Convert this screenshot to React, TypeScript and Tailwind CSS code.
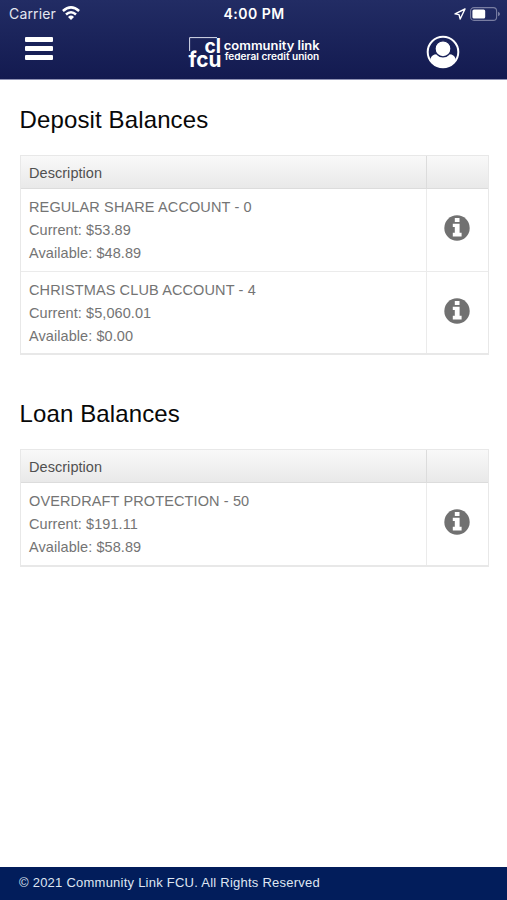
import { Fragment } from 'react'

type Account = {
  name: string
  current: string
  available: string
}

const DEPOSITS: Account[] = [
  { name: 'REGULAR SHARE ACCOUNT - 0', current: '$53.89', available: '$48.89' },
  { name: 'CHRISTMAS CLUB ACCOUNT - 4', current: '$5,060.01', available: '$0.00' },
]

const LOANS: Account[] = [
  { name: 'OVERDRAFT PROTECTION - 50', current: '$191.11', available: '$58.89' },
]

function WifiIcon() {
  return (
    <svg width="18" height="15" viewBox="0 0 18 15" fill="none" stroke="#fff" strokeWidth="2.5">
      <path d="M0.9 5Q9 -2.2 17.1 5" />
      <path d="M4 8.5Q9 3.9 14 8.5" />
      <path d="M6 11Q9 8.2 12 11L9 14Z" fill="#fff" stroke="none" />
    </svg>
  )
}

function LocationIcon() {
  return (
    <svg width="12" height="12" viewBox="0 0 12 12" fill="none" stroke="#fff" strokeWidth="1.4" strokeLinejoin="round">
      <path d="M11 1L1 5.9L5 6.6L6.2 11Z" />
    </svg>
  )
}

function BatteryIcon() {
  return (
    <svg width="30" height="14" viewBox="0 0 30 14">
      <rect x="0.6" y="0.6" width="26" height="12.8" rx="3.4" fill="none" stroke="#797ea2" strokeWidth="1.1" />
      <rect x="2.4" y="2.4" width="12.8" height="9.2" rx="1.6" fill="#fff" />
      <path d="M28 4.8Q30 5.5 30 7Q30 8.5 28 9.2Z" fill="#797ea2" />
    </svg>
  )
}

function Logo() {
  return (
    <svg width="134" height="34" viewBox="0 0 134 34" fill="#fff" className="overflow-visible [font-family:Inter,sans-serif]">
      <path d="M1.6 15V1.6H29" fill="none" stroke="#d9dcec" strokeWidth="1" />
      <text x="16.4" y="16.6" fontSize="19.5" fontWeight="700" textLength="16.5" lengthAdjust="spacingAndGlyphs">cl</text>
      <text x="0.5" y="30.6" fontSize="21" fontWeight="700" textLength="33" lengthAdjust="spacingAndGlyphs">fcu</text>
      <text x="35.8" y="14.4" fontSize="12.5" fontWeight="600" textLength="95.8" lengthAdjust="spacingAndGlyphs">community link</text>
      <text x="36.7" y="23.8" fontSize="9.2" fontWeight="600" textLength="94.6" lengthAdjust="spacingAndGlyphs">federal credit union</text>
    </svg>
  )
}

function ProfileIcon() {
  return (
    <svg width="34" height="34" viewBox="0 0 34 34">
      <circle cx="17" cy="17" r="15.3" fill="none" stroke="#fff" strokeWidth="2" />
      <path d="M4.6 26V23.6C5.2 20.6 7.5 19.4 10.6 19.2H23.4C26.5 19.4 28.8 20.6 29.4 23.6V26A15.3 15.3 0 0 1 4.6 26Z" fill="#fff" />
      <circle cx="17" cy="13.8" r="8" fill="#fff" stroke="#182058" strokeWidth="1.3" />
    </svg>
  )
}

function InfoIcon() {
  return (
    <svg width="26" height="26" viewBox="0 0 26 26">
      <circle cx="13" cy="13" r="12.7" fill="#717171" />
      <path d="M10.8 3H15.5V7H10.8ZM8.8 8.7H15.6V17.8H17.6V21.5H8.8V17.8H10.8V12.1H8.8Z" fill="#fff" />
    </svg>
  )
}

function Balances({ title, accounts }: { title: string; accounts: Account[] }) {
  return (
    <section>
      <h2 className="-ml-[0.5px] h-[34px] text-[24px] leading-[34px] tracking-[0.13px] text-[#080808]">{title}</h2>
      <div className="mt-[18px] grid grid-cols-[406px_1fr] border border-b-2 border-[#e8e8e8] text-[14.5px] text-[#747474]">
        <div className="h-[33px] border-r border-b border-r-[#dcdcdc] border-b-[#dcdcdc] bg-linear-to-b from-[#f9f9f9] to-[#e9e9e9] pl-[8px] leading-[34px] tracking-[0.05px] text-[#505050]">
          Description
        </div>
        <div className="border-b border-[#dcdcdc] bg-linear-to-b from-[#f9f9f9] to-[#e9e9e9]" />
        {accounts.map((account, i) => (
          <Fragment key={account.name}>
            <div
              className={`h-[82px] border-r border-[#ebebeb] pt-[6.6px] pl-[8px] leading-[23.2px] ${i > 0 ? 'border-t' : ''}`}
            >
              <p className="tracking-[0.12px]">{account.name}</p>
              <p className="tracking-[0.07px]">Current: {account.current}</p>
              <p className="tracking-[0.07px]">Available: {account.available}</p>
            </div>
            <button
              aria-label={`Details for ${account.name}`}
              className={`flex h-[82px] items-center justify-center border-[#ebebeb] pr-[1px] pb-[4px] ${i > 0 ? 'border-t' : ''}`}
            >
              <InfoIcon />
            </button>
          </Fragment>
        ))}
      </div>
    </section>
  )
}

export default function App() {
  return (
    <div className="flex h-[900px] w-[507px] flex-col overflow-hidden bg-white font-['Liberation_Sans',sans-serif]">
      <header className="h-[80px] shrink-0 border-b border-[#8f92b4] bg-linear-to-b from-[#222c64] to-[#131a50] text-white">
        {/* Status bar */}
        <div className="grid h-[27px] grid-cols-3 items-center font-['Inter',sans-serif] text-[14px]">
          <div className="flex items-center gap-[6px] pl-[9px]">
            <span className="tracking-[0.15px] text-[#e4e6f0]">Carrier</span>
            <WifiIcon />
          </div>
          <div className="pl-[1px] text-center font-semibold tracking-[0.5px]">4:00 PM</div>
          <div className="flex items-center justify-end gap-[4px] pr-[7px]">
            <LocationIcon />
            <BatteryIcon />
          </div>
        </div>

        {/* Navigation */}
        <div className="grid h-[52px] grid-cols-[188px_1fr_80px] items-start">
          <button aria-label="Menu" className="mt-[10px] ml-[25px] flex w-[28px] flex-col gap-[4px]">
            <span className="h-[5px] rounded-[1px] bg-white" />
            <span className="h-[5px] rounded-[1px] bg-white" />
            <span className="h-[5px] rounded-[1px] bg-white" />
          </button>
          <div className="mt-[9px]">
            <Logo />
          </div>
          <button aria-label="Profile" className="mt-[8px] -ml-[1px] w-[34px]">
            <ProfileIcon />
          </button>
        </div>
      </header>

      <main className="flex flex-1 flex-col gap-[42px] pt-[23px] pr-[18px] pl-[20px]">
        <Balances title="Deposit Balances" accounts={DEPOSITS} />
        <Balances title="Loan Balances" accounts={LOANS} />
      </main>

      <footer className="h-[33px] shrink-0 bg-[#021d5b] pl-[19px] text-[13px] leading-[31px] tracking-[0.24px] text-[#dfe6f2]">
        © 2021 Community Link FCU. All Rights Reserved
      </footer>
    </div>
  )
}
